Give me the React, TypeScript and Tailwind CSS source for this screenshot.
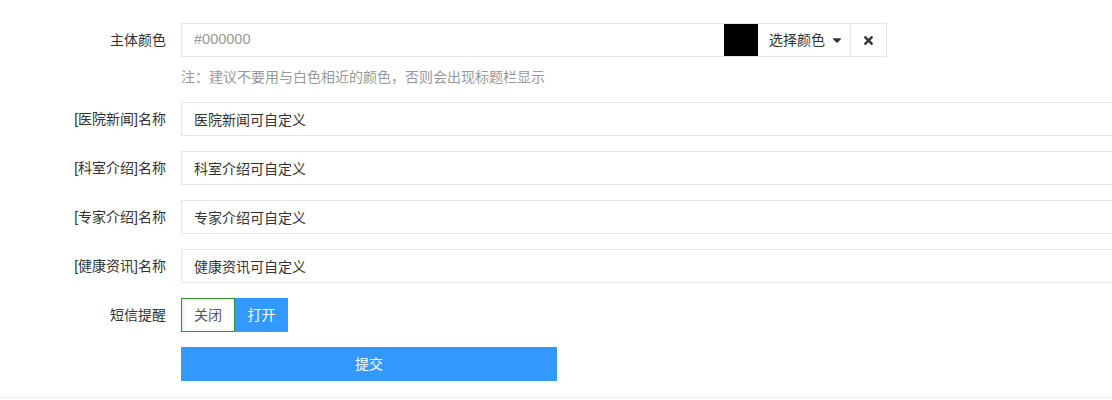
import { FaTimes, FaCaretDown } from "react-icons/fa";

type FieldProps = {
  label: string;
  value: string;
};

const fields: FieldProps[] = [
  { label: "[医院新闻]名称", value: "医院新闻可自定义" },
  { label: "[科室介绍]名称", value: "科室介绍可自定义" },
  { label: "[专家介绍]名称", value: "专家介绍可自定义" },
  { label: "[健康资讯]名称", value: "健康资讯可自定义" },
];

function Label({ text }: { text: string }) {
  return (
    <label className="w-[166px] shrink-0 pr-0 text-right text-[14px] leading-[34px] text-[#333]">
      {text}
    </label>
  );
}

export default function App() {
  return (
    <div
      className="w-[1112px] h-[400px] overflow-hidden bg-white"
      style={{ fontFamily: '"Liberation Sans", "Noto Sans CJK SC", sans-serif' }}
    >
      <div className="h-[398px] border-b border-[#eee] pt-[23px]">
        {/* 主体颜色 */}
        <div className="flex items-start gap-[15px]">
          <Label text="主体颜色" />
          <div>
            <div className="flex h-[34px] w-[706px] border border-[#e6e6e6]">
              <input
                className="flex-1 min-w-0 px-3 text-[14.5px] text-[#333] placeholder:text-[#999] outline-none"
                placeholder="#000000"
              />
              <div className="w-[34px] h-full bg-black" />
              <button className="flex w-[93px] items-center justify-center gap-[5px] border-r border-[#e6e6e6] pl-[5px] text-[14px] text-[#333]">
                选择颜色
                <FaCaretDown className="text-[14px] text-[#333]" />
              </button>
              <button className="flex w-[35px] items-center justify-center text-[#333]">
                <FaTimes className="text-[13px]" />
              </button>
            </div>
            <p className="mt-[10px] mb-[15px] h-5 text-[14px] leading-5 text-[#999]">
              注：建议不要用与白色相近的颜色，否则会出现标题栏显示
            </p>
          </div>
        </div>

        {fields.map((item: FieldProps, index: number) => (
          <div key={index} className="mb-[15px] flex items-start gap-[15px]">
            <Label text={item.label} />
            <input
              className="h-[34px] w-[1000px] shrink-0 border border-[#e6e6e6] px-3 text-[14px] text-[#333] outline-none"
              defaultValue={item.value}
            />
          </div>
        ))}

        {/* 短信提醒 */}
        <div className="mb-[15px] flex items-start gap-[15px]">
          <Label text="短信提醒" />
          <div className="flex h-[34px]">
            <button className="w-[54px] border border-[#3c8a3c] bg-white text-[14px] text-[#555] shadow-[inset_2px_2px_3px_rgba(0,0,0,0.08)]">
              关闭
            </button>
            <button className="w-[53px] bg-[#3399ff] text-[14px] text-white">
              打开
            </button>
          </div>
        </div>

        <div className="flex gap-[15px]">
          <div className="w-[166px] shrink-0" />
          <button className="h-[34px] w-[376px] bg-[#3399ff] text-[14px] text-white">
            提交
          </button>
        </div>
      </div>
    </div>
  );
}
